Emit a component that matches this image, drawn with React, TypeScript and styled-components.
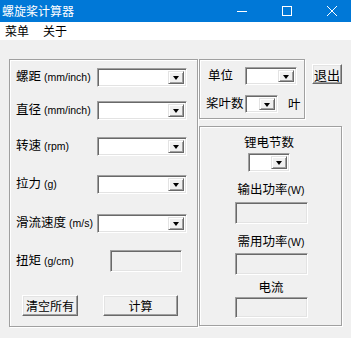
import React from "react";
import styled, { createGlobalStyle } from "styled-components";

const GlobalStyle = createGlobalStyle`
  html, body {
    margin: 0;
    padding: 0;
    background: #f0f0f0;
    overflow: hidden;
  }
  * {
    box-sizing: border-box;
  }
`;

const cjk = `"Noto Sans CJK SC", "Microsoft YaHei", sans-serif`;

const Window = styled.div`
  width: 351px;
  height: 338px;
  background: #f0f0f0;
  font-family: ${cjk};
  color: #000;
`;

const TitleBar = styled.div`
  height: 22px;
  background: #0078d7;
  display: flex;
  align-items: center;
  padding-left: 2px;
`;

const Title = styled.div`
  color: #fff;
  font-size: 12px;
  flex: 1;
  line-height: 22px;
`;

const TitleControls = styled.div`
  display: flex;
  align-items: center;
  gap: 35px;
  padding-right: 14px;
`;

const MenuBar = styled.div`
  height: 18px;
  background: #fff;
  display: flex;
  align-items: center;
  gap: 14px;
  padding-left: 5px;
  font-size: 12px;
`;

const MenuItem = styled.span`
  line-height: 18px;
`;

const Body = styled.div`
  display: flex;
  padding: 19px 0 0 9px;
  gap: 1px;
`;

const GroupBox = styled.div<{ $w: number; $h: number }>`
  width: ${(p) => p.$w}px;
  height: ${(p) => p.$h}px;
  border: 1px solid #a0a0a0;
  box-shadow: inset 1px 1px 0 #fff, 1px 1px 0 #fff;
  display: flex;
  flex-direction: column;
`;

const LeftGroup = styled(GroupBox)`
  padding-left: 6px;
`;

const CenterGroup = styled(GroupBox)`
  align-items: center;
  padding-left: 1px;
`;

const Row = styled.div<{ $top: number; $h?: number; $left?: number }>`
  display: flex;
  align-items: center;
  height: ${(p) => p.$h ?? 19}px;
  margin-top: ${(p) => p.$top}px;
  margin-left: ${(p) => p.$left ?? 0}px;
`;

const Label = styled.div<{ $w?: number }>`
  width: ${(p) => (p.$w ? `${p.$w}px` : "auto")};
  flex-shrink: 0;
  font-size: 12.5px;
  white-space: nowrap;
  line-height: 16px;
  margin-top: -2px;
`;

const Unit = styled.span`
  font-family: "Liberation Sans", Arial, sans-serif;
  font-size: 10.5px;
  margin-left: 3px;
`;

const TightUnit = styled(Unit)`
  margin-left: 0;
`;

const Combo = styled.div<{ $w: number; $h?: number }>`
  width: ${(p) => p.$w}px;
  height: ${(p) => p.$h ?? 19}px;
  background: #fff;
  border: 1px solid;
  border-color: #a0a0a0 #fff #fff #a0a0a0;
  box-shadow: inset 1px 1px 0 #696969, inset -1px -1px 0 #e3e3e3;
  display: flex;
  justify-content: flex-end;
  padding: 2px;
`;

const DropButton = styled.div`
  width: 16px;
  height: 100%;
  background: #f0f0f0;
  border: 1px solid;
  border-color: #e3e3e3 #696969 #696969 #e3e3e3;
  box-shadow: inset 1px 1px 0 #fff, inset -1px -1px 0 #a0a0a0;
  display: flex;
  align-items: center;
  justify-content: center;
  &::after {
    content: "";
    border-left: 3.5px solid transparent;
    border-right: 3.5px solid transparent;
    border-top: 4px solid #000;
    margin-top: 1px;
  }
`;

const TextBox = styled.div<{ $w: number; $h?: number }>`
  width: ${(p) => p.$w}px;
  height: ${(p) => p.$h ?? 22}px;
  background: #f0f0f0;
  border: 1px solid;
  border-color: #a0a0a0 #fff #fff #a0a0a0;
  box-shadow: inset 1px 1px 0 #696969, inset -1px -1px 0 #e3e3e3;
`;

const Button = styled.button<{ $w: number; $h?: number }>`
  width: ${(p) => p.$w}px;
  height: ${(p) => p.$h ?? 21}px;
  background: #f0f0f0;
  border: 1px solid;
  border-color: #fff #696969 #696969 #fff;
  box-shadow: inset -1px -1px 0 #a0a0a0, inset 1px 1px 0 #e3e3e3;
  font-family: ${cjk};
  font-size: 12px;
  color: #000;
  padding: 0;
  display: flex;
  align-items: center;
  justify-content: center;
`;

const ButtonRow = styled(Row)`
  gap: 25px;
  padding-left: 6px;
`;

const RightColumn = styled.div`
  display: flex;
  flex-direction: column;
  gap: 7px;
`;

const TopRight = styled.div`
  display: flex;
  align-items: flex-start;
  gap: 7px;
`;

const ExitButton = styled(Button)`
  margin-top: 5px;
  font-size: 13px;
`;

const Suffix = styled.span`
  font-size: 12.5px;
  margin-left: 10px;
  margin-top: -2px;
`;

const CenterLabel = styled.div<{ $top: number; $shift?: number }>`
  font-size: 12.5px;
  line-height: 16px;
  margin-top: ${(p) => p.$top}px;
  margin-left: ${(p) => p.$shift ?? 0}px;
  white-space: nowrap;
`;

const Spaced = styled.div<{ $top: number; $shift?: number }>`
  margin-top: ${(p) => p.$top}px;
  margin-left: ${(p) => p.$shift ?? 0}px;
`;

const MinIcon = () => (
  <svg width="10" height="10" viewBox="0 0 10 10">
    <line x1="0" y1="5.5" x2="10" y2="5.5" stroke="#fff" strokeWidth="1" />
  </svg>
);

const MaxIcon = () => (
  <svg width="10" height="10" viewBox="0 0 10 10">
    <rect x="0.5" y="0.5" width="9" height="9" fill="none" stroke="#fff" strokeWidth="1" />
  </svg>
);

const CloseIcon = () => (
  <svg width="10" height="10" viewBox="0 0 10 10">
    <path d="M0 0 L10 10 M10 0 L0 10" stroke="#fff" strokeWidth="1" />
  </svg>
);

const DropCombo: React.FC<{ w: number; h?: number }> = ({ w, h }) => (
  <Combo $w={w} $h={h}>
    <DropButton />
  </Combo>
);

const App: React.FC = () => {
  return (
    <Window>
      <GlobalStyle />
      <TitleBar>
        <Title>螺旋桨计算器</Title>
        <TitleControls>
          <MinIcon />
          <MaxIcon />
          <CloseIcon />
        </TitleControls>
      </TitleBar>
      <MenuBar>
        <MenuItem>菜单</MenuItem>
        <MenuItem>关于</MenuItem>
      </MenuBar>

      <Body>
        <LeftGroup $w={189} $h={268}>
          <Row $top={8}>
            <Label $w={81}>
              螺距<Unit>(mm/inch)</Unit>
            </Label>
            <DropCombo w={90} />
          </Row>
          <Row $top={14}>
            <Label $w={81}>
              直径<Unit>(mm/inch)</Unit>
            </Label>
            <DropCombo w={90} />
          </Row>
          <Row $top={17}>
            <Label $w={81}>
              转速<Unit>(rpm)</Unit>
            </Label>
            <DropCombo w={90} />
          </Row>
          <Row $top={19}>
            <Label $w={81}>
              拉力<Unit>(g)</Unit>
            </Label>
            <DropCombo w={90} />
          </Row>
          <Row $top={20}>
            <Label $w={81}>
              滑流速度<Unit>(m/s)</Unit>
            </Label>
            <DropCombo w={90} />
          </Row>
          <Row $top={17} $h={22}>
            <Label $w={94}>
              扭矩<Unit>(g/cm)</Unit>
            </Label>
            <TextBox $w={72} />
          </Row>
          <ButtonRow $top={23} $h={21}>
            <Button $w={56}>清空所有</Button>
            <Button $w={75}>计算</Button>
          </ButtonRow>
        </LeftGroup>

        <RightColumn>
          <TopRight>
            <GroupBox $w={106} $h={60}>
              <Row $top={7} $h={18} $left={8}>
                <Label $w={37}>单位</Label>
                <DropCombo w={52} h={18} />
              </Row>
              <Row $top={10} $h={18} $left={6}>
                <Label $w={39}>桨叶数</Label>
                <DropCombo w={33} h={18} />
                <Suffix>叶</Suffix>
              </Row>
            </GroupBox>
            <ExitButton $w={30} $h={20}>
              退出
            </ExitButton>
          </TopRight>

          <CenterGroup $w={143} $h={200}>
            <CenterLabel $top={7} $shift={-4}>
              锂电节数
            </CenterLabel>
            <Spaced $top={3} $shift={-5}>
              <DropCombo w={42} />
            </Spaced>
            <CenterLabel $top={9}>
              输出功率<TightUnit>(W)</TightUnit>
            </CenterLabel>
            <Spaced $top={4}>
              <TextBox $w={73} />
            </Spaced>
            <CenterLabel $top={9}>
              需用功率<TightUnit>(W)</TightUnit>
            </CenterLabel>
            <Spaced $top={3}>
              <TextBox $w={73} />
            </Spaced>
            <CenterLabel $top={4}>电流</CenterLabel>
            <Spaced $top={2}>
              <TextBox $w={73} $h={21} />
            </Spaced>
          </CenterGroup>
        </RightColumn>
      </Body>
    </Window>
  );
};

export default App;
